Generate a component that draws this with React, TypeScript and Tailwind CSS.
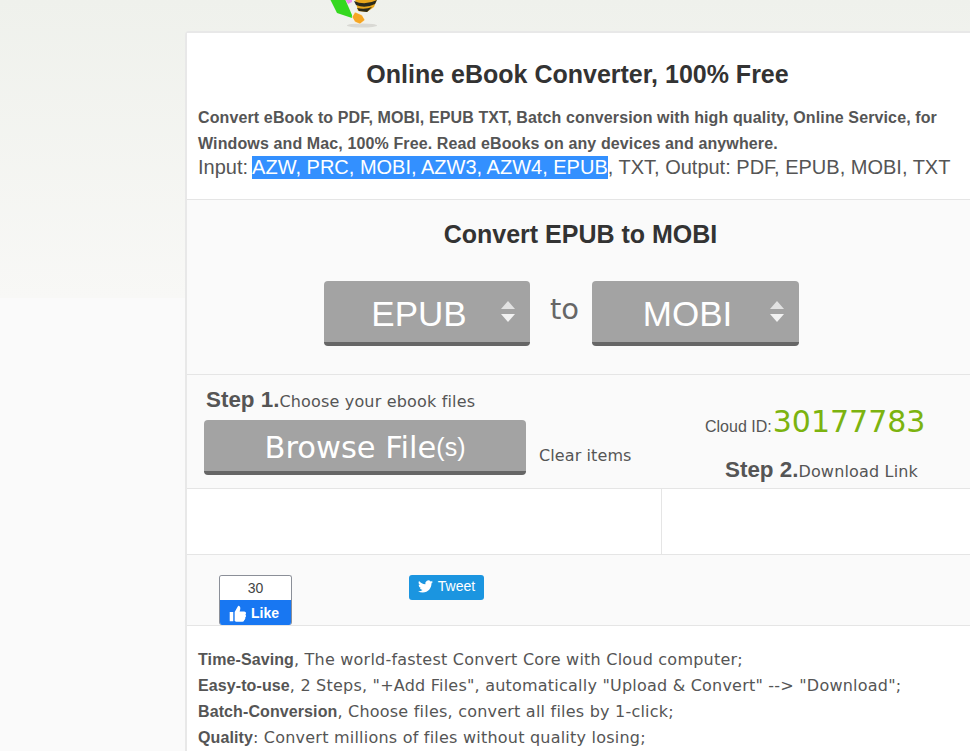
function Arrows() {
  return (
    <svg width="16" height="24" viewBox="0 0 16 24" className="absolute right-[14px] top-[19px]">
      <path d="M8 1 L15 9 H1 Z" fill="#e2e2e2" />
      <path d="M1 14 H15 L8 22 Z" fill="#f2f2f2" />
    </svg>
  )
}

function FormatSelect({ label, width }: { label: string; width: string }) {
  return (
    <div className={`relative flex h-[65px] items-center justify-center rounded-[4px] border-b-[4px] border-[#666] bg-[#a3a3a3] pr-[16px] pt-[5px] text-[35px] text-white ${width}`}>
      {label}
      <Arrows />
    </div>
  )
}

function Bee() {
  return (
    <svg width="60" height="30" viewBox="0 0 60 30" className="absolute left-[325px] top-0">
      <ellipse cx="37" cy="25.500" rx="15" ry="2" fill="#d9d9d4" />
      <path d="M5 -1 L20 -1 L27 15 L27 18 L12 13 Z" fill="#35d81f" />
      <path d="M20 -1 L27 -1 L27 2 L23 4 Z" fill="#ee8fee" />
      <path d="M30 -1 L52 -1 L49 7 L42 12 L33 11 Z" fill="#e9a71c" />
      <path d="M29 1 Q40 6 52 0 L50 4 Q40 9 31 5 Z" fill="#2a2a1c" />
      <path d="M32 8 Q40 10 47 7 L42 12 L34 11 Z" fill="#2a2a1c" />
      <path d="M30 12 L37 15 L40 20 L35 24 L30 22 L27 17 Z" fill="#f5a623" stroke="#fff" strokeWidth="0.5" />
    </svg>
  )
}

function Benefit({ title, text }: { title: string; text: string }) {
  return (
    <p className="h-[26px] leading-[26px]">
      <b className="font-['Liberation_Sans',sans-serif] text-[16px] tracking-[0.1px]">{title}</b>
      <span className="tracking-[0.22px]">{text}</span>
    </p>
  )
}

export default function App() {
  return (
    <div className="relative h-[751px] w-[970px] overflow-hidden bg-[linear-gradient(#eff1ec_0,#f8f8f6_298px,#fafafa_298px)] font-['Liberation_Sans',sans-serif] text-[#555]">
      <Bee />
      <div className="ml-[185px] mt-[31px] w-[800px] rounded-tl-[4px] border-l-2 border-t-2 border-[#e8e8e8] bg-[#fafafa]">
        <div className="h-[167px] border-b border-[#e5e5e5] bg-white pl-[11px]">
          <h1 className="pr-[28px] pt-[25px] text-center text-[25px] font-bold leading-[32px] text-[#333]">
            Online eBook Converter, 100% Free
          </h1>
          <p className="mt-[15px] text-[16px] font-bold leading-[26px] tracking-[0.12px]">
            Convert eBook to PDF, MOBI, EPUB TXT, Batch conversion with high quality, Online Service, for
            <br />
            Windows and Mac, 100% Free. Read eBooks on any devices and anywhere.
          </p>
          <p className="-mt-[1px] text-[20px] leading-[23px]">
            Input: <span className="-ml-[1.500px] inline-block bg-[#3390ff] text-white">AZW, PRC, MOBI, AZW3, AZW4, EPUB</span>, TXT, Output: PDF, EPUB, MOBI, TXT
          </p>
        </div>
        <div className="h-[175px] border-b border-[#e5e5e5]">
          <h2 className="pr-[11px] pt-[18px] text-center text-[25px] font-bold leading-[32px] text-[#333]">
            Convert EPUB to MOBI
          </h2>
          <div className="mt-[31px] flex items-start pl-[137px]">
            <FormatSelect label="EPUB" width="w-[206px]" />
            <span className="w-[62px] pl-[7px] pt-[6px] text-center font-['DejaVu_Sans',sans-serif] text-[29px] leading-[44px] text-[#666]">to</span>
            <FormatSelect label="MOBI" width="w-[207px]" />
          </div>
        </div>
        <div className="flex h-[114px] border-b border-[#e5e5e5]">
          <div className="w-[518px] pl-[19px] pt-[11px]">
            <p className="flex h-[28px] items-baseline font-['DejaVu_Sans',sans-serif] text-[16px] leading-[28px] tracking-[0.17px]">
              <b className="font-['Liberation_Sans',sans-serif] text-[22.400px] tracking-normal">Step 1.</b>
              Choose your ebook files
            </p>
            <div className="mt-[6px] flex items-end">
              <div className="-ml-[2px] flex h-[55px] w-[322px] items-center justify-center rounded-[4px] border-b-[4px] border-[#666] bg-[#a3a3a3] pt-[4px] font-['DejaVu_Sans',sans-serif] text-[30.500px] text-white">
                Browse File<span className="font-['Liberation_Sans',sans-serif] text-[25px]">(s)</span>
              </div>
              <span className="mb-[7px] ml-[13px] font-['DejaVu_Sans',sans-serif] text-[16px] leading-[24px] tracking-[0.1px]">Clear items</span>
            </div>
          </div>
          <div className="pt-[24px] font-['DejaVu_Sans',sans-serif]">
            <p className="flex h-[40px] items-baseline whitespace-nowrap">
              <span className="mr-[1px] font-['Liberation_Sans',sans-serif] text-[16px]">Cloud ID:</span>
              <span className="text-[30px] text-[#7cb30f]">30177783</span>
            </p>
            <p className="mt-[14px] flex items-baseline whitespace-nowrap pl-[20px] text-[16px] tracking-[0.17px]">
              <b className="font-['Liberation_Sans',sans-serif] text-[22.400px] tracking-normal">Step 2.</b>
              Download Link
            </p>
          </div>
        </div>
        <div className="flex h-[66px] border-b border-[#e5e5e5]">
          <div className="w-[475px] border-r border-[#e5e5e5] bg-white" />
          <div className="flex-1 bg-white" />
        </div>
        <div className="flex h-[71px] items-start border-b border-[#e5e5e5] pl-[32px] pt-[20px]">
          <div className="h-[50px] w-[73px] overflow-hidden rounded-[3px] border border-b-0 border-[#8b8f98]">
            <div className="h-[24px] bg-white text-center text-[14px] leading-[24px] text-[#444]">30</div>
            <div className="flex h-[26px] items-center justify-center gap-[5px] bg-[#1877f2] pr-[3px] text-[14px] font-bold text-white">
              <svg width="17" height="17" viewBox="0 0 24 24" fill="#fff">
                <path d="M1 10h5v13H1zM8 22V10l5-9c2 0 3 1.500 3 3.500 0 1.500-.6 3.500-1 4.500h6.500c1.500 0 2.500 1 2.500 2.500 0 .8-.3 1.500-.8 2 .5.500.8 1.200.8 2 0 1-.5 1.800-1.200 2.200.2.400.2.800.2 1.300 0 1-.6 1.800-1.500 2.200 0 1.500-1 2.300-2.500 2.300H11c-1.500 0-2-.5-3-1z" />
              </svg>
              Like
            </div>
          </div>
          <div className="ml-[117px] flex h-[25px] w-[75px] items-center justify-center gap-[5px] rounded-[3px] bg-[#1b95e0] pb-[2px] text-[14px] text-white">
            <svg width="15" height="15" viewBox="0 0 24 24" fill="#fff">
              <path d="M23.950 4.570a10 10 0 0 1-2.820.770 4.960 4.960 0 0 0 2.160-2.720c-.950.550-2 .950-3.130 1.180a4.920 4.920 0 0 0-8.380 4.480C7.690 8.090 4.070 6.130 1.640 3.160a4.820 4.820 0 0 0-.660 2.470c0 1.710.870 3.210 2.190 4.100a4.900 4.900 0 0 1-2.230-.620v.060a4.920 4.920 0 0 0 3.950 4.830 5 5 0 0 1-2.210.080 4.940 4.940 0 0 0 4.600 3.420A9.870 9.870 0 0 1 0 19.540a14 14 0 0 0 7.560 2.210c9.050 0 14-7.500 14-13.980 0-.210 0-.420-.020-.630a9.940 9.940 0 0 0 2.460-2.550z" />
            </svg>
            Tweet
          </div>
        </div>
        <div className="bg-white pl-[11px] pt-[21px] font-['DejaVu_Sans',sans-serif] text-[16px]">
          <Benefit title="Time-Saving" text=", The world-fastest Convert Core with Cloud computer;" />
          <Benefit title="Easy-to-use" text={', 2 Steps, "+Add Files", automatically "Upload & Convert" --> "Download";'} />
          <Benefit title="Batch-Conversion" text=", Choose files, convert all files by 1-click;" />
          <Benefit title="Quality" text=": Convert millions of files without quality losing;" />
        </div>
      </div>
    </div>
  )
}
